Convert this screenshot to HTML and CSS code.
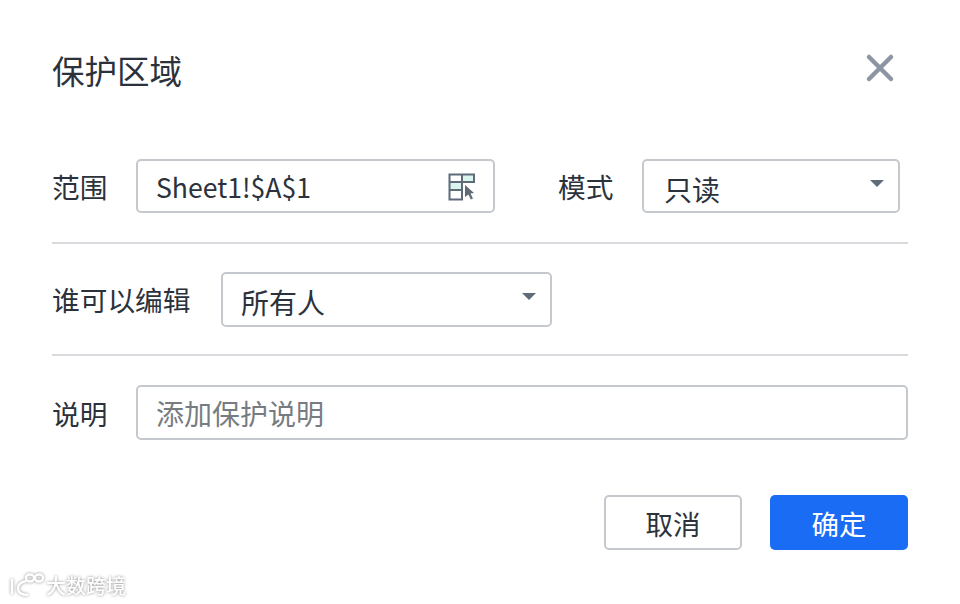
FILE: index.html
```html
<!DOCTYPE html>
<html lang="zh-CN">
<head>
<meta charset="utf-8">
<title>保护区域</title>
<link rel="stylesheet" href="styles.css">
</head>
<body>
<div class="dialog">
  <header class="head">
    <h1 class="title">保护区域</h1>
    <svg class="close" width="30" height="30" viewBox="0 0 30 30"><path d="M4 4 L26 26 M26 4 L4 26" stroke="#8c95a3" stroke-width="4.500" stroke-linecap="round" fill="none"/></svg>
  </header>
  <section class="row row-first">
    <span class="label label-range">范围</span>
    <div class="field field-range">
      <span class="value value-latin">Sheet1!$A$1</span>
      <svg class="pick" width="28" height="28" viewBox="0 0 28 28">
        <rect x="14" y="2" width="12" height="7" fill="#d9f5ee"/>
        <rect x="2" y="9" width="12" height="7" fill="#d9f5ee"/>
        <path d="M1.500 1.500H26V9H14V26.500H1.500ZM1.500 9H14M1.500 17H14M14 1.500V9" fill="none" stroke="#5e6b78" stroke-width="2"/>
        <path d="M17 12 L26 20 L22.500 20.500 L25 25.500 L22.800 26.500 L20.500 21.500 L17 24 Z" fill="#5e6b78"/>
      </svg>
    </div>
    <span class="label label-mode">模式</span>
    <div class="field field-mode">
      <span class="value value-mode">只读</span>
      <span class="caret"></span>
    </div>
  </section>
  <section class="row row-second">
    <span class="label label-who">谁可以编辑</span>
    <div class="field field-who">
      <span class="value">所有人</span>
      <span class="caret"></span>
    </div>
  </section>
  <section class="row row-third">
    <span class="label label-range">说明</span>
    <div class="field field-note"><span class="placeholder">添加保护说明</span></div>
  </section>
  <footer class="actions">
    <button class="btn btn-cancel">取消</button>
    <button class="btn btn-ok">确定</button>
  </footer>
</div>
<div class="mark">
  <svg width="38" height="26" viewBox="0 0 38 26"><path d="M4 6 V21 M18 8 Q10 10 10 15 Q10 22 20 22 M18 5 a4 3.500 0 1 0 8 0 a4 3.500 0 1 0 -8 0 M27 5 a4 3.500 0 1 0 8 0 a4 3.500 0 1 0 -8 0" fill="none" stroke="#fff" stroke-width="2.500"/></svg>
  <span class="mark-text">大数跨境</span>
</div>
</body>
</html>
```
FILE: styles.css
```css
* { box-sizing: border-box; }
html, body { margin: 0; padding: 0; }
body {
  width: 960px;
  height: 604px;
  background: #fff;
  position: relative;
  overflow: hidden;
  font-family: "Noto Sans CJK SC", "Noto Sans", sans-serif;
  color: #2b323b;
}
.dialog { padding: 0 52px; width: 960px; }
.head {
  height: 144px;
  display: flex;
  justify-content: space-between;
  align-items: flex-start;
  padding-top: 47px;
}
.title { margin: 0; font-size: 32.5px; line-height: 46px; font-weight: 400; }
.close { margin: 6px 13px 0 0; }
.row { display: flex; align-items: center; }
.row-first { height: 100px; padding: 16px 8px 31px 0; border-bottom: 2px solid #d9dadd; }
.row-second { height: 112px; padding: 28px 0 28px; border-bottom: 2px solid #d9dadd; }
.row-third { padding-top: 29px; }
.label { font-size: 27.7px; line-height: 40px; }
.label-range { width: 84px; flex: none; }
.label-mode { width: 84px; flex: none; margin-left: 63px; }
.label-who { width: 169px; flex: none; }
.field {
  height: 54px;
  border: 2px solid #c5c9ce;
  border-radius: 5px;
  display: flex;
  align-items: center;
  justify-content: space-between;
  background: #fff;
}
.field-range { width: 359px; padding: 0 18px 0 18px; }
.field-mode { width: 258px; height: 54px; padding: 0 14px 0 20px; }
.field-who { width: 331px; height: 55px; padding: 0 14px 0 18px; }
.field-note { flex: 1; height: 55px; padding: 0 18px; }
.value { font-size: 28px; line-height: 40px; padding-top: 5px; }
.value-latin { font-size: 26.6px; padding-top: 2px; }
.value-mode { padding-top: 6px; }
.pick { margin: 2px -1px 0 0; }
.placeholder { font-size: 28px; line-height: 40px; color: #777c83; }
.caret {
  width: 0;
  height: 0;
  border-left: 7px solid transparent;
  border-right: 7px solid transparent;
  border-top: 7px solid #5e6b78;
  margin-bottom: 5px;
}
.actions { display: flex; justify-content: flex-end; gap: 28px; padding-top: 55px; }
.btn {
  width: 138px;
  height: 55px;
  border-radius: 5px;
  font-family: inherit;
  font-size: 27.5px;
  padding: 0;
}
.btn-cancel { background: #fff; border: 2px solid #c5c9ce; color: #2b323b; }
.btn-ok { background: #1a6cf5; border: 0; color: #fff; }
.mark {
  position: absolute;
  left: 8px;
  top: 573px;
  display: flex;
  align-items: center;
  filter: drop-shadow(0 0 1.500px #8f8f8f);
}
.mark-text { font-size: 20px; line-height: 26px; color: #fff; font-weight: 500; }
```
